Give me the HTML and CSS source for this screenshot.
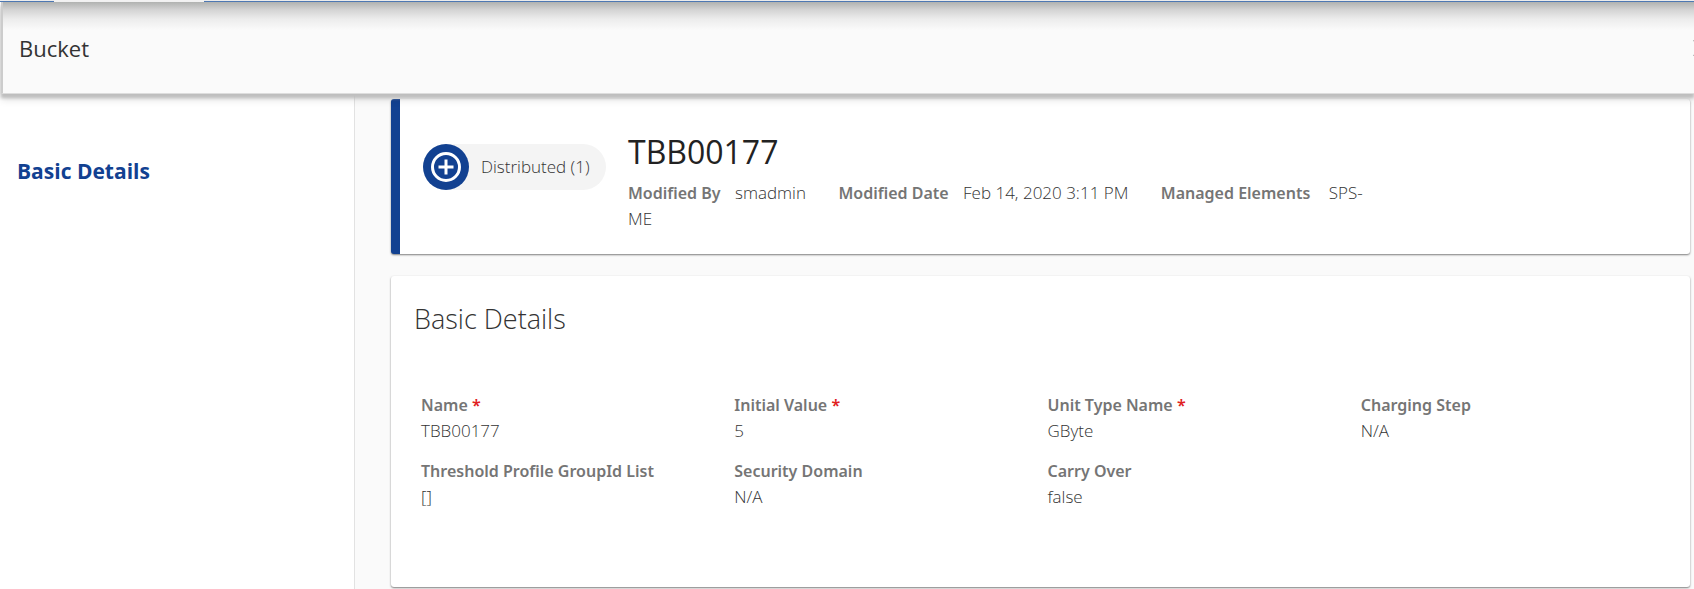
FILE: index.html
```html
<!DOCTYPE html>
<html lang="en">
<head>
<meta charset="utf-8">
<title>Bucket</title>
<link rel="stylesheet" href="styles.css">
</head>
<body>
<div class="tab-strip"><span class="tab-active"></span></div>
<header class="topbar">
  <h1 class="topbar-title">Bucket</h1>
  <button class="close" type="button" aria-label="Close">
    <svg viewBox="0 0 18 18" width="18" height="18"><path d="M1 1 17 17M17 1 1 17"/></svg>
  </button>
</header>
<div class="layout">
  <nav class="sidebar"><a class="nav-link" href="#basic-details">Basic Details</a></nav>
  <main class="content">
    <section class="card summary">
      <div class="chip">
        <svg class="chip-icon" viewBox="0 0 46 46" width="46" height="46">
          <circle cx="23" cy="23" r="23" fill="#124191"/>
          <circle cx="23" cy="23" r="13.500" fill="none" stroke="#fff" stroke-width="3"/>
          <path d="M23 15.500v15M15.500 23h15" stroke="#fff" stroke-width="3"/>
        </svg>
        <span class="chip-text">Distributed (1)</span>
      </div>
      <div class="summary-body">
        <h2 class="summary-title">TBB00177</h2>
        <p class="meta">
          <span class="meta-label">Modified By</span> <span class="meta-value">smadmin</span>
          <span class="meta-label">Modified Date</span> <span class="meta-value">Feb 14, 2020 3:11 PM</span>
          <span class="meta-label">Managed Elements</span> <span class="meta-last">SPS-</span><wbr><span>ME</span>
        </p>
      </div>
    </section>
    <section class="card details" id="basic-details">
      <h2 class="details-title">Basic Details</h2>
      <dl class="fields">
        <div class="field"><dt>Name <span class="req">*</span></dt><dd>TBB00177</dd></div>
        <div class="field"><dt>Initial Value <span class="req">*</span></dt><dd>5</dd></div>
        <div class="field"><dt>Unit Type Name <span class="req">*</span></dt><dd>GByte</dd></div>
        <div class="field"><dt>Charging Step</dt><dd>N/A</dd></div>
        <div class="field"><dt>Threshold Profile GroupId List</dt><dd>[]</dd></div>
        <div class="field"><dt>Security Domain</dt><dd>N/A</dd></div>
        <div class="field"><dt>Carry Over</dt><dd>false</dd></div>
      </dl>
    </section>
  </main>
</div>
</body>
</html>
```
FILE: styles.css
```css
* { box-sizing: border-box; }

body {
  margin: 0;
  min-height: 100vh;
  display: flex;
  flex-direction: column;
  overflow: hidden;
  background: #fafafa;
  color: #333;
  font-family: "Open Sans", "Noto Sans", sans-serif;
  font-size: 17px;
  font-weight: 300;
  line-height: 26px;
}

h1, h2, p, dl, dd { margin: 0; }

.tab-strip {
  height: 2px;
  padding-left: 54px;
  background: linear-gradient(#eee 1px, #4f7ab5 1px);
}

.tab-active {
  display: block;
  width: 150px;
  height: 2px;
  background: #f4f4f4;
}

.topbar {
  position: relative;
  z-index: 1;
  display: flex;
  align-items: center;
  justify-content: space-between;
  height: 92px;
  margin-left: 1px;
  padding: 0 0 0 16px;
  border-left: 2px solid #ccc;
  border-bottom: 1px solid #ddd;
  background: linear-gradient(#b0b2b0, #d4d4d4 8px, #ececec 17px, #fafafa 28px);
  box-shadow: 0 4px 3px #bebebe, 0 5px 8px rgba(0, 0, 0, 0.15);
}

.topbar-title {
  color: #333;
  font-size: 22px;
  font-weight: 400;
  line-height: 32px;
}

.close {
  flex: none;
  margin-right: -17px;
  padding: 0;
  border: 0;
  background: none;
  line-height: 0;
}

.close path { fill: none; stroke: #666; stroke-width: 2; }

.layout { flex: 1; display: flex; }

.sidebar {
  flex: none;
  width: 355px;
  padding: 61px 17px;
  border-right: 1px solid #e2e2e2;
  background: #fff;
}

.nav-link {
  color: #124191;
  font-size: 21px;
  font-weight: 700;
  line-height: 32px;
  text-decoration: none;
}

.content {
  flex: 1;
  display: flex;
  flex-direction: column;
  gap: 22px;
  padding: 5px 4px 2px 36px;
}

.card {
  border-radius: 3px;
  background: #fff;
  box-shadow: 0 1px 2px rgba(0, 0, 0, 0.5);
}

.summary {
  display: flex;
  align-items: flex-start;
  gap: 22px;
  padding: 31px 24px 22px 23px;
  border-left: 9px solid #124191;
}

.chip {
  flex: none;
  display: flex;
  align-items: center;
  gap: 12px;
  width: 183px;
  margin-top: 14px;
  border-radius: 23px;
  background: #f4f4f4;
}

.summary-body { flex: 0 1 742px; }

.summary-title {
  color: #222;
  font-size: 32px;
  font-weight: 400;
  line-height: 44px;
  margin-bottom: 6px;
}

.meta-label, dt {
  color: #757575;
  font-family: "Noto Sans", "Open Sans", sans-serif;
  font-size: 16px;
  font-weight: 600;
}

.meta-value { margin: 0 28px 0 10px; }
.meta-last { margin-left: 14px; }

.details { flex: 1; padding: 25px 16px 76px 23px; }

.details-title {
  font-size: 27px;
  font-weight: 300;
  line-height: 36px;
}

.fields {
  display: grid;
  grid-template-columns: repeat(4, 1fr);
  row-gap: 14px;
  padding: 55px 0 0 7px;
}

.req { color: #e02020; }
```
